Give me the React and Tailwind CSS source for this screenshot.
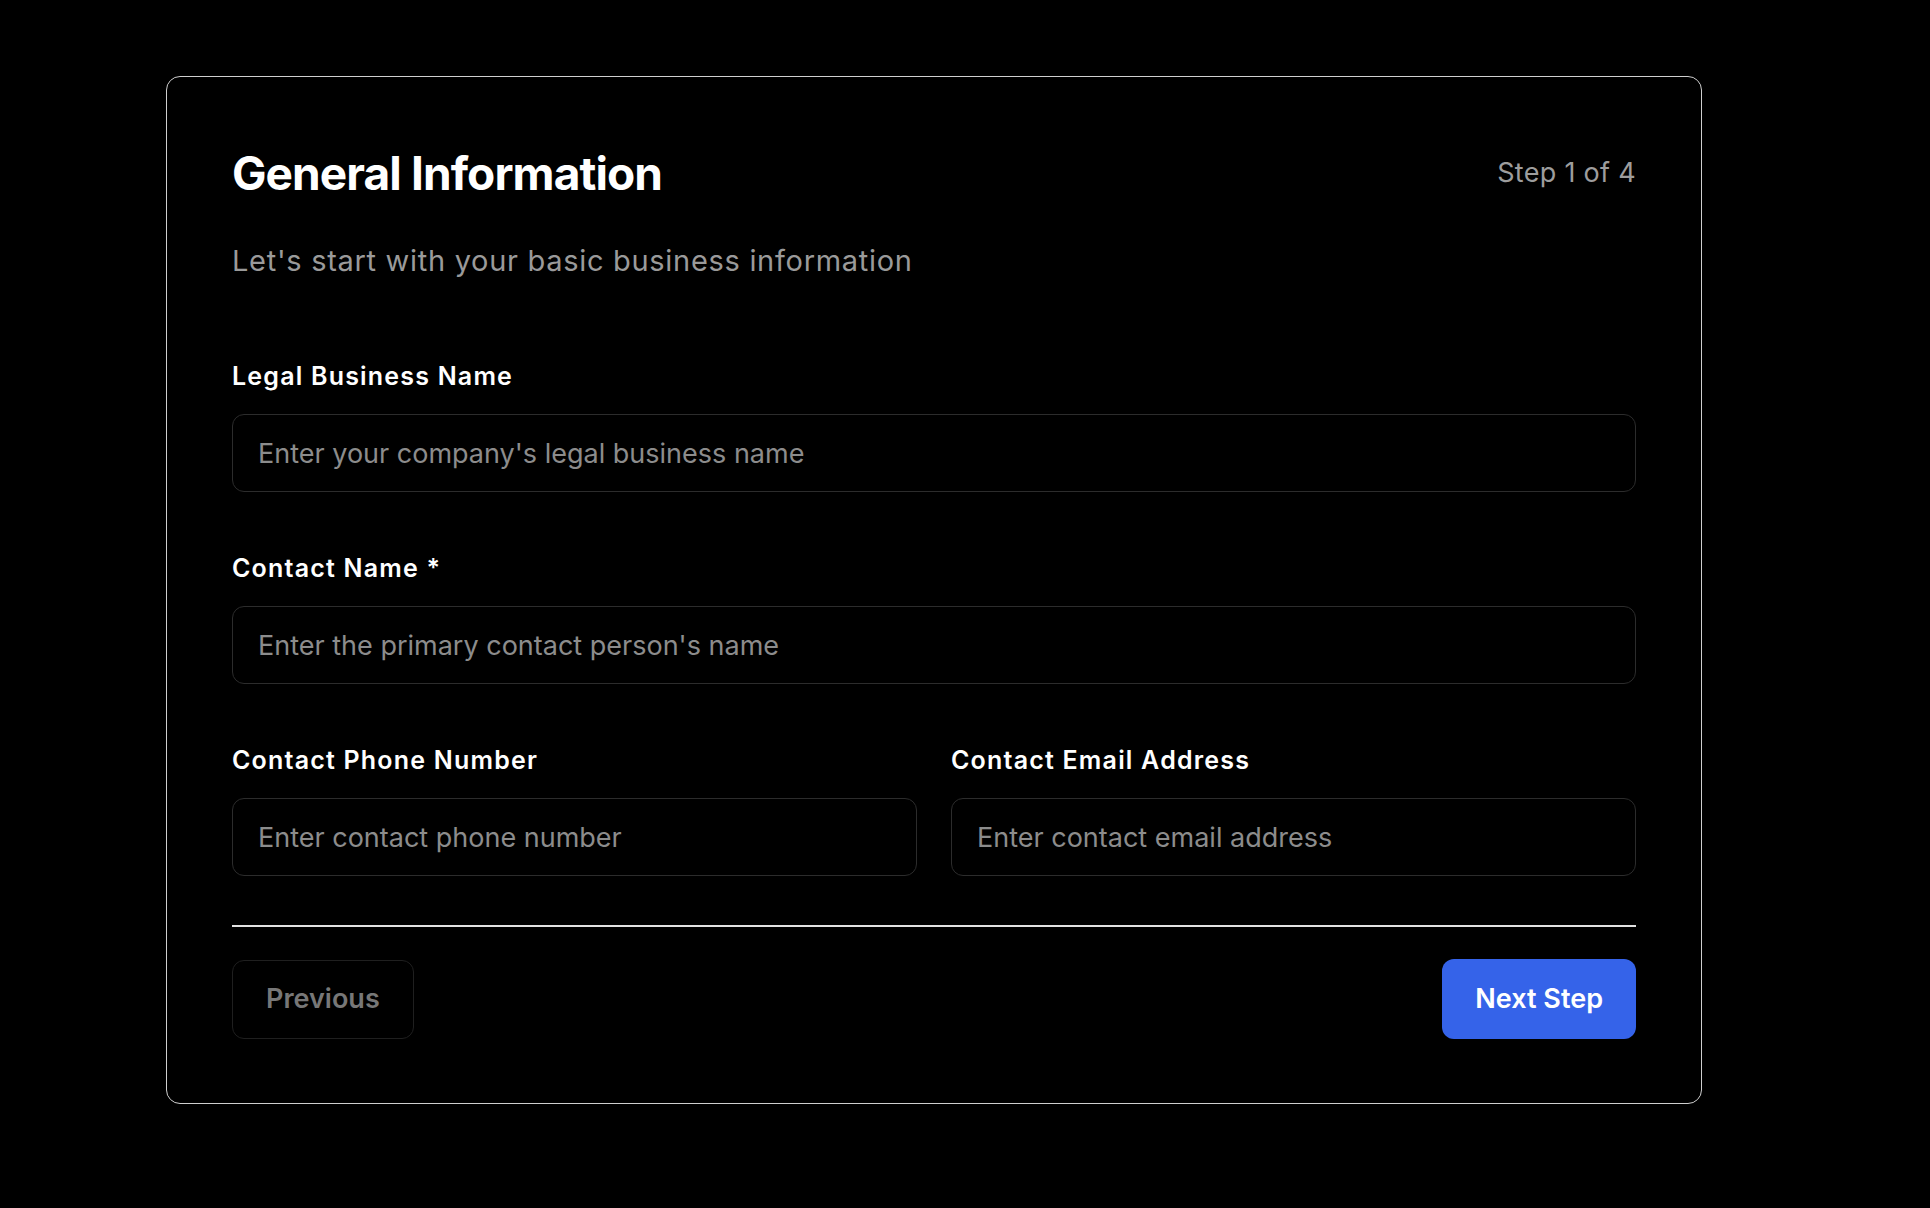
import React from 'react';

const inputClass = "w-full h-[78px] rounded-[12px] border border-[#2c2c2c] bg-black px-[25px] text-[27px] text-white placeholder:text-[#8c8c8c] outline-none";
const labelClass = "block text-[25px] leading-[32px] tracking-[1.2px] font-semibold text-white mb-[22px]";

const Field = ({ label, placeholder, type = "text" }) => (
    <div>
        <label className={labelClass}>{label}</label>
        <input type={type} placeholder={placeholder} className={inputClass} />
    </div>
);

export default function App() {
    return (
        <div className="min-h-screen bg-black font-['Inter',sans-serif] pt-[76px] pl-[166px] pb-[105px]">
            <div className="w-[1536px] rounded-[14px] border border-[#cfcfcf] bg-black px-[65px] pt-[67px] pb-[64px]">
                <div className="flex items-center justify-between">
                    <h1 className="text-[46px] leading-[58px] tracking-[-0.9px] font-bold text-white">General Information</h1>
                    <span className="text-[27px] leading-[36px] tracking-[0.3px] text-[#9d9d9d]">Step 1 of 4</span>
                </div>
                <p className="mt-[41px] text-[29px] leading-[36px] tracking-[0.7px] text-[#9a9a9a]">
                    Let's start with your basic business information
                </p>

                <form className="mt-[81px]" onSubmit={(e) => e.preventDefault()}>
                    <div className="space-y-[60px]">
                        <Field label="Legal Business Name" placeholder="Enter your company's legal business name" />
                        <Field label="Contact Name *" placeholder="Enter the primary contact person's name" />
                        <div className="grid grid-cols-2 gap-x-[34px]">
                            <Field label="Contact Phone Number" placeholder="Enter contact phone number" type="tel" />
                            <Field label="Contact Email Address" placeholder="Enter contact email address" type="email" />
                        </div>
                    </div>

                    <div className="mt-[49px] h-[2px] bg-[#e2e2e2]" />

                    <div className="mt-[32px] flex items-center justify-between">
                        <button
                            type="button"
                            disabled
                            className="h-[79px] px-[33px] rounded-[12px] border border-[#1f1f1f] text-[27px] font-semibold text-[#777777]"
                        >
                            Previous
                        </button>
                        <button
                            type="submit"
                            className="h-[80px] px-[33px] rounded-[12px] bg-[#3563e9] text-[27px] font-semibold text-white"
                        >
                            Next Step
                        </button>
                    </div>
                </form>
            </div>
        </div>
    );
}
